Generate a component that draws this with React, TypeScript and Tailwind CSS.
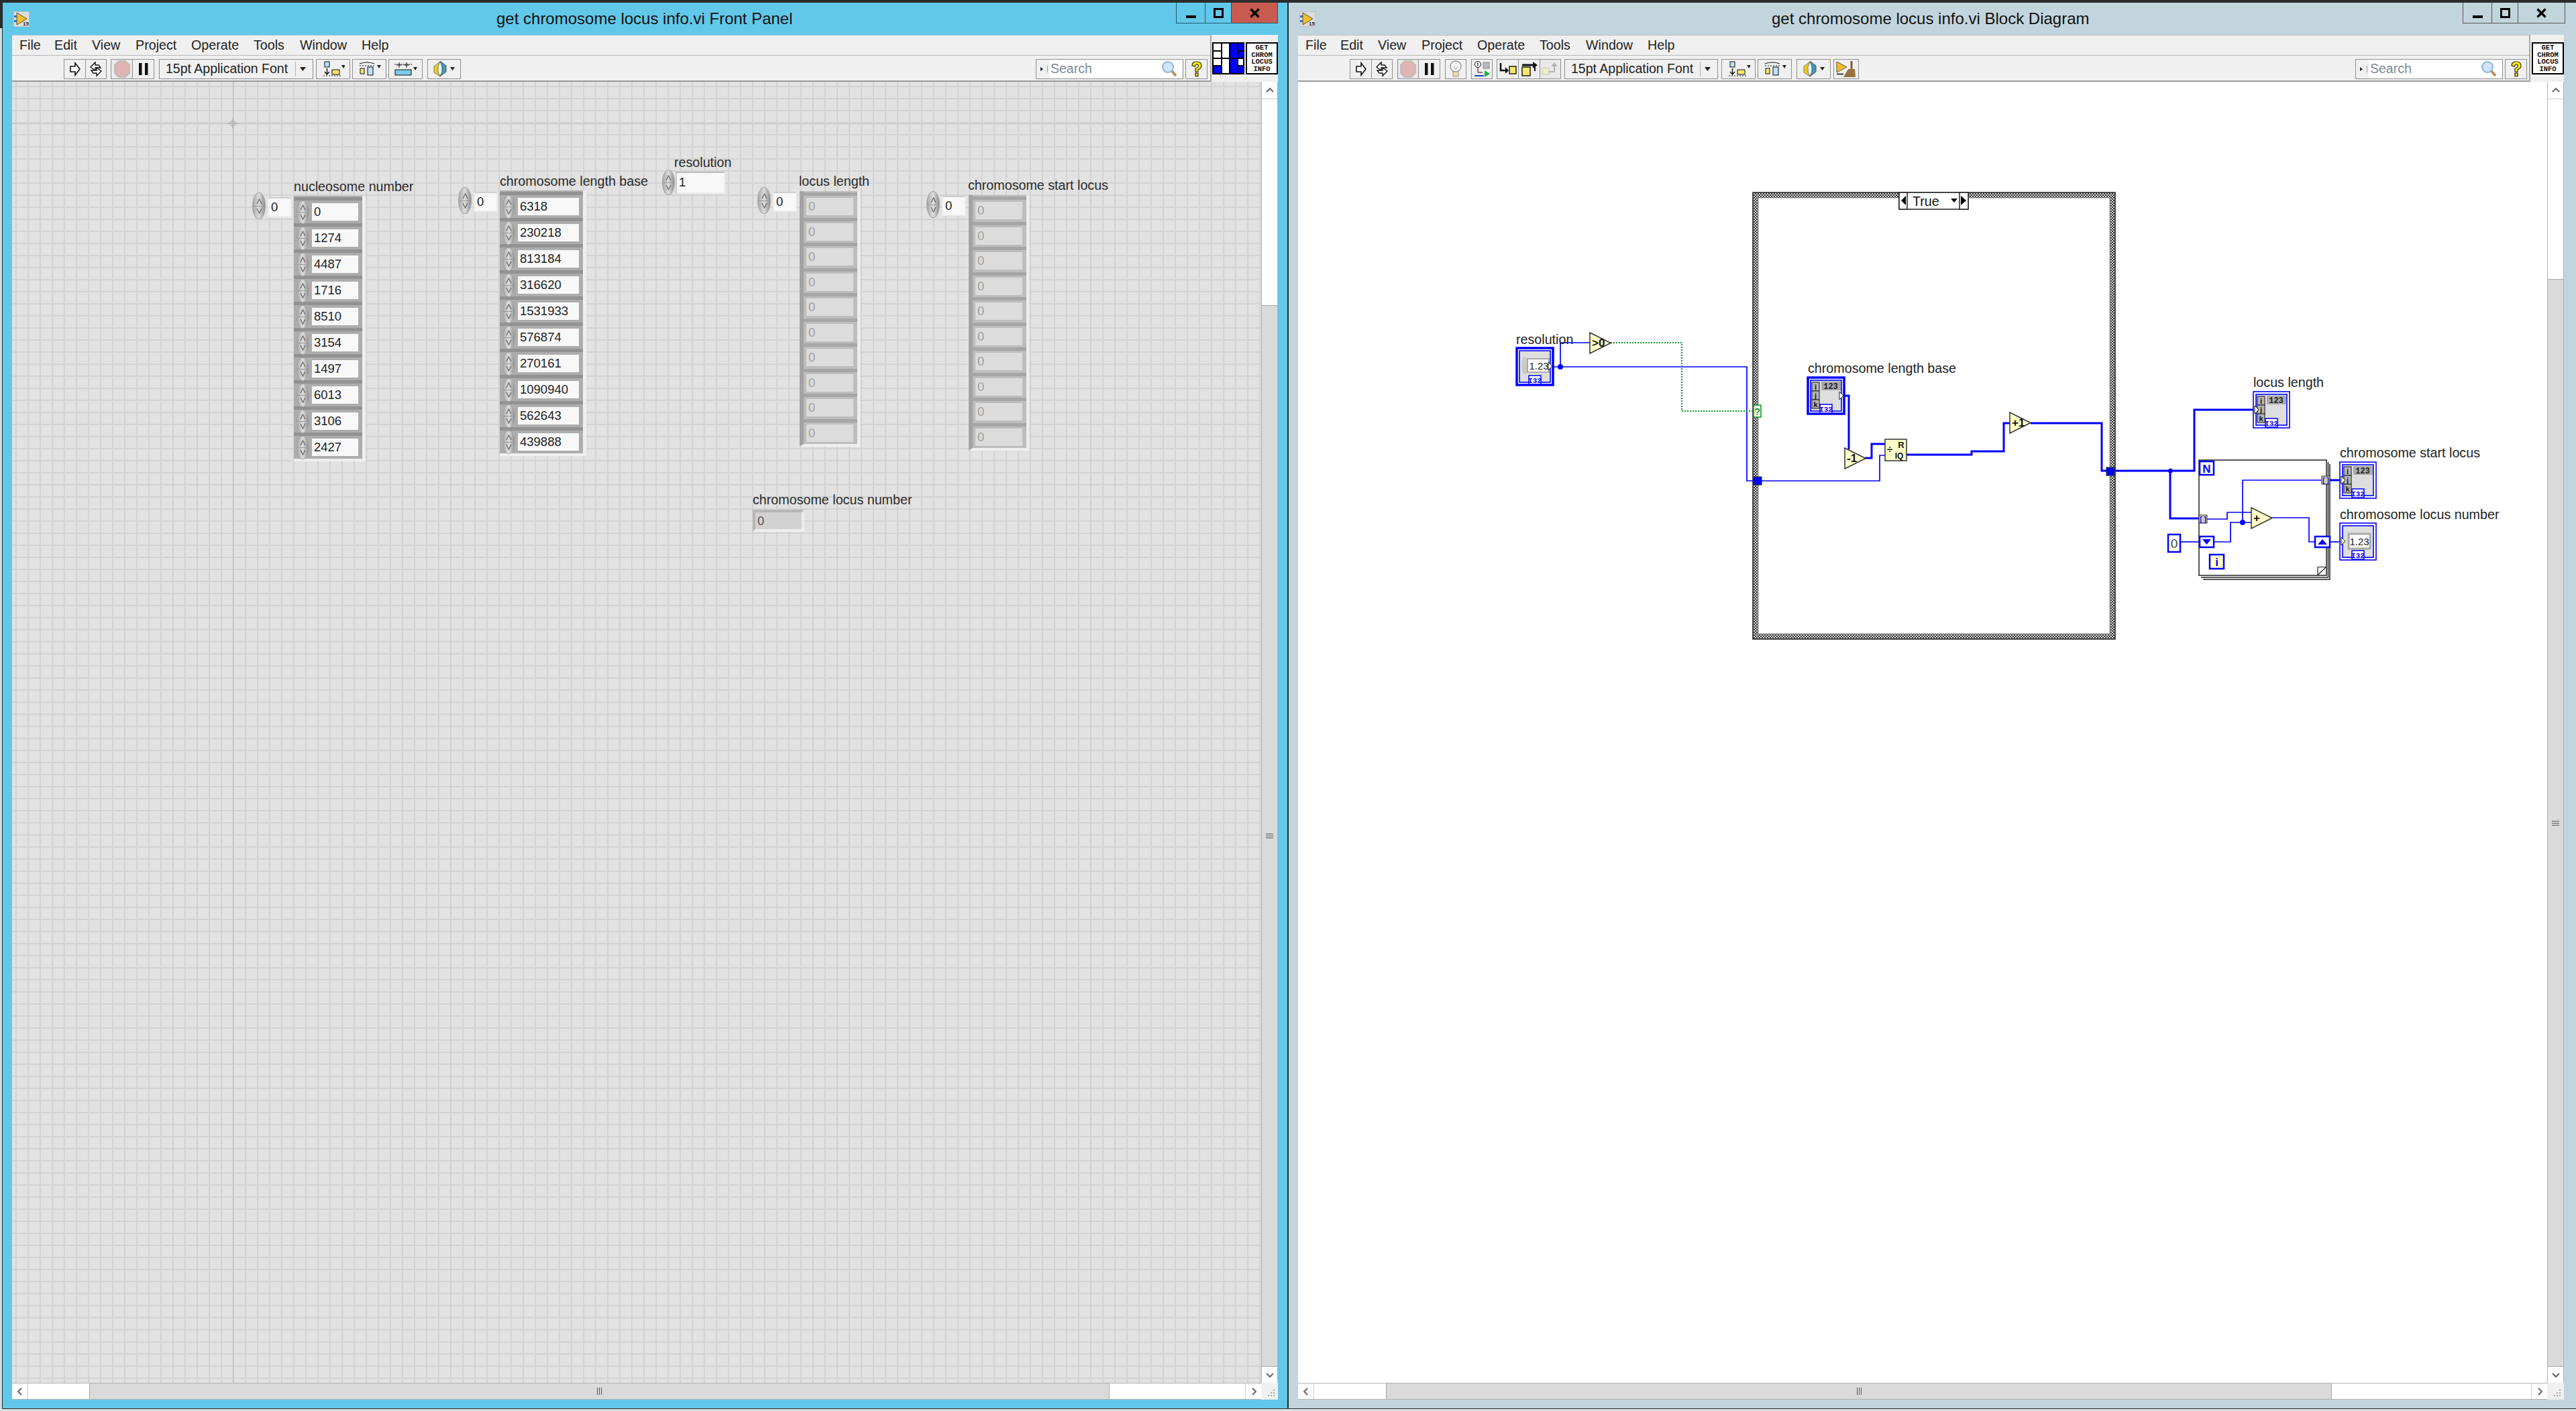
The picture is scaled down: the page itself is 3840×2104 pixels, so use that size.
import React from "react";

const BLUE = "#0000ff";

const Tri = ({ x, y, label, size = 17 }: { x: number; y: number; label: string; size?: number }) => (
  <g>
    <polygon points={`${x},${y} ${x + 31},${y + 15.5} ${x},${y + 31}`} fill="#ffffc8" stroke="#333" strokeWidth="1.5" />
    <text x={x + 3} y={y + 21} fontSize={size} fontWeight="bold" fill="#111">{label}</text>
  </g>
);

const I32 = ({ x, y }: { x: number; y: number }) => (
  <g>
    <rect x={x} y={y} width="18" height="13" fill="#fff" stroke={BLUE} strokeWidth="1.5" />
    <text x={x + 9} y={y + 11} fontSize="11" fontWeight="bold" fill={BLUE} textAnchor="middle" fontFamily="Liberation Mono">I32</text>
  </g>
);

const IJK = ({ x, y }: { x: number; y: number }) => (
  <g>
    {["i", "j", "k"].map((c, n) => (
      <g key={c}>
        <rect x={x} y={y + n * 13} width="11" height="13" fill="#b5b5b5" stroke="#333" strokeWidth="1.2" />
        <text x={x + 5.5} y={y + 10.5 + n * 13} fontSize="11" fontWeight="bold" fill="#111" textAnchor="middle">{c}</text>
      </g>
    ))}
  </g>
);

const Terminal = ({ x, y, h = 56, thick, kind }: { x: number; y: number; h?: number; thick?: boolean; kind: "array" | "scalar" }) => {
  const tipX = thick ? x + 48 : x + 3;
  return (
    <g>
      <rect x={x + 1} y={y + 1} width="54" height={h - 2} fill="#fff" stroke={BLUE} strokeWidth={thick ? 3.5 : 1.6} />
      <rect x={x + 5} y={y + 5} width="46" height={h - 10} fill="#dedede" stroke={BLUE} strokeWidth="1.6" />
      {kind === "array" && <IJK x={x + 7} y={y + 8} />}
      {kind === "array" && (
        <g>
          <rect x={x + 21} y={y + 7} width="29" height="13" fill="#aaa" />
          <text x={x + 35} y={y + 18} fontSize="12" fontWeight="bold" fontFamily="Liberation Mono" textAnchor="middle" fill="#222">123</text>
        </g>
      )}
      {kind === "scalar" && thick && (
        <g>
          <ellipse cx={x + 13} cy={y + 27} rx="5" ry="13" fill="#c9c9c9" />
          <rect x={x + 17} y={y + 17} width="32" height="20" fill="#fff" stroke="#aaa" strokeWidth="2" />
          <text x={x + 34} y={y + 33} fontSize="15" fill="#222" textAnchor="middle">1.23</text>
        </g>
      )}
      {kind === "scalar" && !thick && (
        <g>
          <rect x={x + 14} y={y + 17} width="32" height="22" fill="#fff" stroke="#aaa" strokeWidth="3" />
          <text x={x + 30} y={y + 34} fontSize="15" fill="#222" textAnchor="middle">1.23</text>
        </g>
      )}
      <polygon points={`${tipX},${y + 22} ${tipX + 6},${y + 28} ${tipX},${y + 34}`} fill="#fff" stroke="#222" strokeWidth="1" />
      <I32 x={x + 19} y={y + h - 15} />
    </g>
  );
};

const ArrTunnel = ({ x, y }: { x: number; y: number }) => (
  <g>
    <rect x={x} y={y} width="12" height="12" fill="#d8cfa8" stroke="#333" strokeWidth="1" />
    <text x={x + 6} y={y + 10} fontSize="10" fontWeight="bold" fill={BLUE} textAnchor="middle" fontFamily="Liberation Mono">[]</text>
  </g>
);

const Diagram = () => (
  <svg viewBox="1935 122 1862 1940" className="block h-[1940px] w-[1862px] shrink-0">
    <defs>
      <pattern id="chk" width="4" height="4" patternUnits="userSpaceOnUse">
        <rect width="4" height="4" fill="#d8d8d8" />
        <rect width="2" height="2" fill="#333" />
        <rect x="2" y="2" width="2" height="2" fill="#333" />
      </pattern>
    </defs>

    {/* case structure */}
    <rect x="2617" y="291" width="532" height="658" fill="none" stroke="url(#chk)" strokeWidth="8" />
    <rect x="2613" y="287" width="540" height="666" fill="none" stroke="#222" strokeWidth="1.5" />
    <rect x="2621" y="295" width="524" height="650" fill="none" stroke="#777" strokeWidth="0.8" />
    <rect x="2831" y="287" width="103" height="25" fill="#fff" stroke="#222" strokeWidth="1.5" />
    <rect x="2831" y="287" width="12" height="25" fill="#fff" stroke="#222" strokeWidth="1.5" />
    <rect x="2921" y="287" width="13" height="25" fill="#fff" stroke="#222" strokeWidth="1.5" />
    <polygon points="2841,292 2841,306 2834,299" fill="#000" />
    <polygon points="2923,292 2923,306 2931,299" fill="#000" />
    <polygon points="2908,296 2918,296 2913,302" fill="#000" />
    <text x="2851" y="307" fontSize="19.7" fill="#111">True</text>

    {/* for loop frame, under its wires */}
    <polyline points="3473,692 3473,864 3284,864" fill="none" stroke="#222" strokeWidth="1.5" />
    <polyline points="3470.5,689 3470.5,861 3281,861" fill="none" stroke="#222" strokeWidth="1.5" />
    <rect x="3278" y="686" width="190" height="172" fill="#fff" stroke="#222" strokeWidth="1.5" />
    <path d="M3455 857.5 V845.5 H3467.5" fill="none" stroke="#222" strokeWidth="1.2" />
    <path d="M3455 857.5 L3467.5 845.5" fill="none" stroke="#222" strokeWidth="1.2" />

    {/* scalar wires */}
    <g fill="none" stroke={BLUE} strokeWidth="1.7">
      <polyline points="2316,547 2604,547 2604,717 2614,717" />
      <polyline points="2326,547 2326,511 2370,511" />
      <polyline points="2626,717 2802,717 2802,679 2810,679" />
      <polyline points="3290,774 3320,774 3320,764 3356,764" />
      <polyline points="3301,808 3325,808 3325,779 3356,779" />
      <polyline points="3461,716 3343,716 3343,779" />
      <polyline points="3251,808 3278,808" />
      <polyline points="3386,772 3442,772 3442,808 3450,808" />
      <polyline points="3473,808 3487,808" />
    </g>
    <polyline points="2401,511 2507,511 2507,613 2614,613" fill="none" stroke="#009a20" strokeWidth="2" strokeDasharray="2 2" />

    {/* array wires */}
    <g fill="none" stroke={BLUE} strokeWidth="3">
      <polyline points="2750,590 2756,590 2756,670" />
      <polyline points="2780,683 2790,683 2790,662 2810,662" />
      <polyline points="2842,678 2939,678 2939,673 2987,673 2987,631 2996,631" />
      <polyline points="3027,631 3133,631 3133,702 3140,702" />
      <polyline points="3152,702 3271,702 3271,611 3360,611" />
      <polyline points="3235,702 3235,773 3278,773" />
      <polyline points="3473,716 3490,716" />
    </g>
    <circle cx="2326" cy="547" r="4" fill={BLUE} />
    <circle cx="3235.5" cy="702" r="3.5" fill={BLUE} />
    <circle cx="3343" cy="779" r="4" fill={BLUE} />

    {/* tunnels */}
    <rect x="2614" y="711" width="12" height="12" fill={BLUE} stroke="#222" strokeWidth="1" />
    <rect x="3140" y="697" width="12" height="12" fill={BLUE} stroke="#222" strokeWidth="1" />
    <rect x="2614" y="604" width="11" height="18" fill="#e8f8e0" stroke="#009a20" strokeWidth="1.5" />
    <text x="2619.5" y="619" fontSize="15" fill="#006a10" textAnchor="middle">?</text>

    {/* primitives */}
    <Tri x={2370} y={496} label=">0" />
    <Tri x={2750} y={668} label="-1" />
    <Tri x={2996} y={615} label="+1" />
    <Tri x={3356} y={757} label=" +" />
    <rect x="2810" y="655" width="32" height="32" fill="#ffffc8" stroke="#333" strokeWidth="1.5" />
    <text x="2817" y="675" fontSize="15" fontWeight="bold" fill="#111" textAnchor="middle">÷</text>
    <text x="2834" y="668" fontSize="13" fontWeight="bold" fill="#111" textAnchor="middle">R</text>
    <text x="2831" y="684" fontSize="12" fontWeight="bold" fill="#111" textAnchor="middle">IQ</text>

    {/* for loop terminals */}
    <rect x="3279" y="688" width="21" height="20" fill="#fff" stroke={BLUE} strokeWidth="2.5" />
    <text x="3289.5" y="705" fontSize="17" fontWeight="bold" fill={BLUE} textAnchor="middle">N</text>
    <rect x="3294" y="827" width="21" height="21" fill="#ffffc8" stroke={BLUE} strokeWidth="2.5" />
    <text x="3304.5" y="844" fontSize="17" fontWeight="bold" fill={BLUE} textAnchor="middle">i</text>
    <ArrTunnel x={3278} y={768} />
    <ArrTunnel x={3461} y={710} />
    <rect x="3279" y="800" width="21" height="16" fill="#fff" stroke={BLUE} strokeWidth="2.5" />
    <polygon points="3283,804 3296,804 3289.5,812" fill={BLUE} />
    <rect x="3451" y="800" width="22" height="16" fill="#fff" stroke={BLUE} strokeWidth="2.5" />
    <polygon points="3455,812 3469,812 3462,804" fill={BLUE} />
    <rect x="3232" y="797" width="18" height="26" fill="#fff" stroke={BLUE} strokeWidth="2.5" />
    <text x="3241" y="817" fontSize="19" fill="#444" textAnchor="middle">0</text>

    {/* terminals */}
    <Terminal x={2260} y={518} h={57} thick kind="scalar" />
    <Terminal x={2694} y={562} thick kind="array" />
    <Terminal x={3358} y={583} kind="array" />
    <Terminal x={3487} y={688} kind="array" />
    <Terminal x={3487} y={779} h={57} kind="scalar" />

    {/* labels */}
    <g fontSize="19.7" fill="#222">
      <text x="2260" y="513">resolution</text>
      <text x="2695" y="556">chromosome length base</text>
      <text x="3359" y="577">locus length</text>
      <text x="3488" y="682">chromosome start locus</text>
      <text x="3488" y="774">chromosome locus number</text>
    </g>
  </svg>
);

const Spinner = ({ className }: { className: string }) => (
  <div className={`flex shrink-0 flex-col items-center justify-center gap-[2px] rounded-[50%] border border-[#a5a5a5] bg-linear-to-r from-[#a8a8a8] via-[#dedede] to-[#8f8f8f] ${className}`}>
    <svg width="9" height="9" viewBox="0 0 9 9"><path d="M1 8 L4.5 1 L8 8" fill="none" stroke="#666" strokeWidth="1.2" /></svg>
    <div className="h-px w-full bg-[#9a9a9a]" />
    <svg width="9" height="9" viewBox="0 0 9 9"><path d="M1 1 L4.5 8 L8 1" fill="none" stroke="#666" strokeWidth="1.2" /></svg>
  </div>
);

const NumInput = ({ value, className }: { value: string; className: string }) => (
  <div className={`flex items-center pl-[3px] text-[18.5px] text-[#222] ${className}`}>{value}</div>
);

const Label = ({ text, className }: { text: string; className: string }) => (
  <div className={`absolute whitespace-nowrap text-[19.7px] leading-6 text-[#2a2a2a] ${className}`}>{text}</div>
);

const IndexBox = ({ className }: { className: string }) => (
  <div className={`absolute flex items-start gap-[3px] ${className}`}>
    <Spinner className="h-[40px] w-[20px]" />
    <NumInput value="0" className="mt-[7px] h-[30px] w-[36px] border-2 border-t-[#cfcfcf] border-r-[#ededed] border-b-[#ededed] border-l-[#ededed] bg-[#f8f8f8]" />
  </div>
);

const ControlArray = ({ values, width, className }: { values: string[]; width: string; className: string }) => (
  <div className={`absolute border-r-[5px] border-b-[4px] border-r-[#efefef] border-b-[#efefef] bg-[#adadad] pt-[2px] ${className}`}>
    {values.map((v) => (
      <div key={v} className="flex h-[39px] items-center gap-[4px] border-t-[5px] border-t-[#929292] pr-[6px] pl-[4px]">
        <Spinner className="h-[35px] w-[19px]" />
        <NumInput value={v} className={`h-[26px] bg-[#f8f8f8] ${width}`} />
      </div>
    ))}
  </div>
);

const ZEROS = ["a", "b", "c", "d", "e", "f", "g", "h", "i", "j"];

const IndicatorArray = ({ className }: { className: string }) => (
  <div className={`absolute w-[90px] border-r-[4px] border-b-[4px] border-l-[6px] border-r-[#efefef] border-b-[#efefef] border-l-[#a3a3a3] bg-[#bdbdbd] pt-[2px] ${className}`}>
    {ZEROS.map((k) => (
      <div key={k} className="flex h-[37.5px] items-center border-t-[5px] border-t-[#a6a6a6] pr-[5px] pl-[4px]">
        <div className="flex h-[26px] w-[70px] items-center bg-[#dcdcdc] pl-[3px] text-[18.5px] text-[#a0a0a0]">0</div>
      </div>
    ))}
  </div>
);

const FrontPanel = () => (
  <div className="relative min-w-0 flex-1 overflow-hidden bg-[#e2e2e2] bg-[linear-gradient(to_right,#d3d3d3_2px,transparent_2px),linear-gradient(to_bottom,#d3d3d3_2px,transparent_2px)] bg-size-[18px_18px] bg-position-[5px_6px]">
    <div className="absolute top-0 bottom-0 left-[329px] w-px bg-[#b9b9b9]" />
    <div className="absolute top-[62px] right-0 left-0 h-px bg-[#c4c4c4]" />
    <svg width="16" height="16" viewBox="0 0 16 16" className="absolute top-[54px] left-[321px]">
      <circle cx="8" cy="8" r="4" fill="none" stroke="#aaa" />
      <path d="M8 0V16M0 8H16" stroke="#aaa" />
    </svg>

    <Label text="nucleosome number" className="top-[144px] left-[420px]" />
    <IndexBox className="top-[165px] left-[358px]" />
    <ControlArray className="top-[170px] left-[420px]" width="w-[69px]" values={["0", "1274", "4487", "1716", "8510", "3154", "1497", "6013", "3106", "2427"]} />

    <Label text="chromosome length base" className="top-[136px] left-[727px]" />
    <IndexBox className="top-[157px] left-[665px]" />
    <ControlArray className="top-[162px] left-[727px]" width="w-[91px]" values={["6318", "230218", "813184", "316620", "1531933", "576874", "270161", "1090940", "562643", "439888"]} />

    <Label text="resolution" className="top-[108px] left-[987px]" />
    <div className="absolute top-[131px] left-[969px] flex items-center gap-[1px]">
      <Spinner className="h-[38px] w-[19px]" />
      <NumInput value="1" className="h-[33px] w-[74px] border-2 border-t-[#bdbdbd] border-r-[#ededed] border-b-[#ededed] border-l-[#c8c8c8] bg-[#f8f8f8]" />
    </div>

    <Label text="locus length" className="top-[136px] left-[1173px]" />
    <IndexBox className="top-[157px] left-[1111px]" />
    <IndicatorArray className="top-[163px] left-[1174px]" />

    <Label text="chromosome start locus" className="top-[142px] left-[1425px]" />
    <IndexBox className="top-[163px] left-[1363px]" />
    <IndicatorArray className="top-[169px] left-[1426px]" />

    <Label text="chromosome locus number" className="top-[611px] left-[1104px]" />
    <div className="absolute top-[638px] left-[1104px] flex h-[33px] w-[77px] items-center border-[4px] border-t-[#b5b5b5] border-r-[#ededed] border-b-[#ededed] border-l-[#b5b5b5] bg-[#d2d2d2] pl-[3px] text-[18.5px] text-[#555]">0</div>
  </div>
);

const Chevron = ({ dir }: { dir: "up" | "down" | "left" | "right" }) => {
  const d = { up: "M2 9 L7 4 L12 9", down: "M2 5 L7 10 L12 5", left: "M9 2 L4 7 L9 12", right: "M5 2 L10 7 L5 12" }[dir];
  return (
    <svg width="14" height="14" viewBox="0 0 14 14"><path d={d} fill="none" stroke="#666" strokeWidth="2" /></svg>
  );
};

const VScroll = ({ whiteTop }: { whiteTop: string }) => (
  <div className="flex w-[25px] shrink-0 flex-col border-r border-l border-[#b0b0b0] bg-white">
    <div className="flex h-[26px] items-center justify-center border-b border-[#ccc]"><Chevron dir="up" /></div>
    <div className={whiteTop} />
    <div className="flex flex-1 flex-col items-center justify-center gap-[2px] border-y border-[#a8a8a8] bg-[#dadada]">
      <div className="h-[1px] w-[11px] bg-[#555]" />
      <div className="h-[1px] w-[11px] bg-[#555]" />
      <div className="h-[1px] w-[11px] bg-[#555]" />
    </div>
    <div className="flex h-[24px] items-center justify-center"><Chevron dir="down" /></div>
  </div>
);

const HScroll = ({ leftWhite, rightWhite }: { leftWhite: string; rightWhite: string }) => (
  <div className="flex h-[25px] shrink-0">
    <div className="flex min-w-0 flex-1 border-y border-[#b4b4b4] bg-white">
      <div className="flex w-[24px] shrink-0 items-center justify-center border-r border-[#ccc]"><Chevron dir="left" /></div>
      <div className={leftWhite} />
      <div className="flex flex-1 items-center justify-center gap-[2px] border-x border-[#a8a8a8] bg-[#dadada]">
        <div className="h-[11px] w-[1px] bg-[#555]" />
        <div className="h-[11px] w-[1px] bg-[#555]" />
        <div className="h-[11px] w-[1px] bg-[#555]" />
      </div>
      <div className={rightWhite} />
      <div className="flex w-[24px] shrink-0 items-center justify-center border-l border-[#ccc]"><Chevron dir="right" /></div>
    </div>
    <div className="flex w-[25px] shrink-0 items-end justify-end bg-[#f0f0f0] p-[4px]">
      <svg width="12" height="12" viewBox="0 0 12 12" fill="#aaa">
        <rect x="9" y="1" width="2" height="2" /><rect x="5" y="5" width="2" height="2" /><rect x="9" y="5" width="2" height="2" />
        <rect x="1" y="9" width="2" height="2" /><rect x="5" y="9" width="2" height="2" /><rect x="9" y="9" width="2" height="2" />
      </svg>
    </div>
  </div>
);

const LvIcon = () => (
  <svg width="24" height="23" viewBox="0 0 24 23" className="shrink-0">
    <rect width="24" height="23" fill="#ddd" stroke="#aaa" />
    <rect x="1" y="6" width="8" height="3" fill="#3a70c0" />
    <rect x="1" y="13" width="8" height="3" fill="#3a70c0" />
    <polygon points="5,2 20,11 5,20" fill="#f0c020" stroke="#555" />
    <text x="14" y="21" fontSize="8" fontWeight="bold" fill="#222">15</text>
  </svg>
);

const WinButtons = ({ tone, closeTone, widths }: { tone: string; closeTone: string; widths: string[] }) => (
  <div className={`flex h-[31px] self-start border-r border-b border-l ${tone}`}>
    <div className={`flex items-end justify-center pb-[7px] ${widths[0]}`}><div className="h-[4px] w-[15px] bg-black" /></div>
    <div className={`flex items-center justify-center border-l ${tone} ${widths[1]}`}><div className="h-[15px] w-[15px] border-[3px] border-black" /></div>
    <div className={`flex items-center justify-center border-l ${tone} ${closeTone} ${widths[2]}`}>
      <svg width="15" height="15" viewBox="0 0 15 15"><path d="M1.5 1.5 L13.5 13.5 M13.5 1.5 L1.5 13.5" stroke="#000" strokeWidth="3.4" /></svg>
    </div>
  </div>
);

const MenuBar = ({ items }: { items: [string, string][] }) => (
  <div className="flex h-[31px] shrink-0 items-center border-t border-b border-t-[#b8c2c6] border-b-[#b8b8b8] pl-[11px] text-[19.7px] text-[#222]">
    {items.map(([name, w]) => (
      <div key={name} className={w}>{name}</div>
    ))}
  </div>
);

const Btn = ({ w, children, dim }: { w: string; children: React.ReactNode; dim?: boolean }) => (
  <div className={`flex h-[30px] shrink-0 items-center justify-center border border-[#8f8f8f] ${dim ? "bg-[#e9e9e9]" : "bg-[#f0f0f0]"} ${w}`}>{children}</div>
);

const Run = () => (
  <svg width="20" height="22" viewBox="0 0 20 22"><path d="M3 7 H10 V2 L17 11 L10 20 V15 H3 Z" fill="#fff" stroke="#111" strokeWidth="1.6" /></svg>
);
const RunCont = () => (
  <svg width="22" height="24" viewBox="0 0 22 24" fill="#fff" stroke="#111" strokeWidth="1.4">
    <path d="M3 9 L10 2 V6 H15 L18 10 H10 V14 Z" />
    <path d="M19 15 L12 22 V18 H7 L4 14 H12 V10 Z" />
  </svg>
);
const Abort = () => (
  <svg width="24" height="26" viewBox="0 0 24 26"><polygon points="7,1 17,1 23,7 23,19 17,25 7,25 1,19 1,7" fill="#e0b4b4" stroke="#b5b5b5" strokeWidth="1.5" /></svg>
);
const Pause = () => (
  <svg width="16" height="20" viewBox="0 0 16 20"><rect x="1" y="1" width="4.5" height="18" fill="#111" /><rect x="10" y="1" width="4.5" height="18" fill="#111" /></svg>
);
const Drop = () => <svg width="9" height="6" viewBox="0 0 9 6"><polygon points="0,0 9,0 4.5,6" fill="#222" /></svg>;
const AlignIcon = () => (
  <svg width="34" height="24" viewBox="0 0 34 24">
    <rect x="4" y="1" width="7" height="8" fill="#bfe0f5" stroke="#111" />
    <path d="M7.5 11V19M4 16L7.5 20L11 16" fill="none" stroke="#111" strokeWidth="1.4" />
    <rect x="15" y="13" width="11" height="7" fill="#f5e870" stroke="#111" />
    <path d="M2 22H28" stroke="#111" strokeDasharray="2 2" />
    <polygon points="29,6 35,6 32,11" fill="#222" />
  </svg>
);
const DistIcon = () => (
  <svg width="34" height="24" viewBox="0 0 34 24">
    <path d="M2 4 Q13 0 24 4" fill="none" stroke="#111" />
    <path d="M2 7H24" stroke="#111" strokeDasharray="2 2" />
    <rect x="3" y="11" width="6" height="8" fill="#f5e870" stroke="#111" />
    <rect x="14" y="9" width="8" height="12" fill="#bfe0f5" stroke="#111" />
    <polygon points="28,6 34,6 31,11" fill="#222" />
  </svg>
);
const ResizeIcon = () => (
  <svg width="36" height="24" viewBox="0 0 36 24">
    <path d="M1 5H27" stroke="#111" strokeDasharray="2 1" />
    <path d="M8 2V10M19 2V10M4 6H12M15 6H23" stroke="#111" />
    <rect x="2" y="13" width="24" height="8" fill="#7ccbe8" stroke="#111" />
    <polygon points="29,9 35,9 32,14" fill="#222" />
  </svg>
);
const ReorderIcon = () => (
  <svg width="36" height="26" viewBox="0 0 36 26">
    <path d="M12 2 L3 9 V18 L12 24 L9 17 V9 Z" fill="#e8d020" stroke="#777" />
    <path d="M12 1 L21 8 V17 L12 24 L15 17 V9 Z" fill="#3a9ac0" stroke="#555" />
    <polygon points="27,10 34,10 30.5,15" fill="#222" />
  </svg>
);
const Bulb = () => (
  <svg width="20" height="26" viewBox="0 0 20 26">
    <circle cx="10" cy="9" r="8" fill="#f5f5f5" stroke="#999" strokeWidth="1.4" />
    <path d="M7 9L10 14L13 9" fill="none" stroke="#aaa" />
    <rect x="6" y="17" width="8" height="7" fill="#e8e0a0" stroke="#999" />
  </svg>
);
const Retain = () => (
  <svg width="26" height="26" viewBox="0 0 26 26">
    <circle cx="7" cy="6" r="4.5" fill="#fff" stroke="#111" />
    <path d="M7 3V9" stroke="#111" />
    <rect x="15" y="3" width="9" height="9" fill="#bbb" stroke="#888" />
    <path d="M7 11V18H14" fill="none" stroke="#111" />
    <path d="M2 23H16" stroke="#2040d0" strokeWidth="2" />
    <polygon points="17,15 25,20 17,25" fill="#20b040" />
  </svg>
);
const StepInto = () => (
  <svg width="28" height="22" viewBox="0 0 28 22">
    <path d="M3 2V13H10" fill="none" stroke="#111" strokeWidth="2.5" />
    <polygon points="10,8 15,13 10,18" fill="#111" />
    <rect x="16" y="7" width="10" height="11" fill="#f5e870" stroke="#111" strokeWidth="1.4" />
  </svg>
);
const StepOver = () => (
  <svg width="28" height="24" viewBox="0 0 28 24">
    <rect x="3" y="9" width="12" height="13" fill="#f5e870" stroke="#111" strokeWidth="1.4" />
    <path d="M3 6H20" stroke="#111" strokeWidth="3" />
    <polygon points="19,1 26,6 19,11" fill="#111" />
    <path d="M22 8V15" stroke="#111" strokeWidth="2" />
  </svg>
);
const StepOut = () => (
  <svg width="28" height="22" viewBox="0 0 28 22" opacity="0.55">
    <rect x="2" y="9" width="10" height="10" fill="#f5f0b0" stroke="#aaa" />
    <path d="M12 15H20V6" fill="none" stroke="#888" strokeWidth="2" />
    <polygon points="15,7 20,1 25,7" fill="#888" />
  </svg>
);
const Cleanup = () => (
  <svg width="32" height="26" viewBox="0 0 32 26">
    <polygon points="2,2 17,10 2,18" fill="#f0c020" stroke="#555" />
    <path d="M24 1V13" stroke="#8a5a20" strokeWidth="3" />
    <polygon points="19,13 29,13 30,25 12,25" fill="#9a7040" />
    <rect x="2" y="19" width="10" height="3" fill="#777" />
  </svg>
);

const FontPicker = ({ w, sep }: { w: string; sep: string }) => (
  <div className={`relative flex h-[30px] shrink-0 items-center border border-[#8f8f8f] bg-[#f0f0f0] pl-[9px] text-[19.5px] whitespace-nowrap text-[#222] ${w}`}>
    15pt Application Font
    <div className={`absolute top-[3px] bottom-[3px] w-px bg-[#b0b0b0] ${sep}`} />
    <div className="absolute top-[11px] right-[10px] flex"><Drop /></div>
  </div>
);

const SearchBox = () => (
  <div className="flex h-[30px] w-[220px] shrink-0 items-center border border-[#8f8f8f] bg-[#f0f0f0]">
    <svg width="14" height="10" viewBox="0 0 14 10" className="ml-[5px] shrink-0"><polygon points="1,2 5,5 1,8" fill="#222" /><path d="M11.5 0V10" stroke="#999" /></svg>
    <div className="flex h-full flex-1 items-center justify-between bg-white pr-[8px] pl-[2px] text-[19.5px] text-[#7c8a99]">
      Search
      <svg width="24" height="25" viewBox="0 0 24 25">
        <path d="M15 15 L22 23" stroke="#c08a50" strokeWidth="3.5" />
        <circle cx="10" cy="10" r="8" fill="#cfe6fa" stroke="#8fb4dc" strokeWidth="2" />
      </svg>
    </div>
  </div>
);

const Help = ({ w }: { w: string }) => (
  <div className={`ml-[3px] flex h-[30px] shrink-0 items-center justify-center border border-[#8f8f8f] bg-[#f0f0f0] ${w}`}>
    <svg width="18" height="24" viewBox="0 0 18 24">
      <path d="M2 7 Q2 1 9 1 Q16 1 16 7 Q16 11 11 13 V16 H7 V11 Q12 9 11.5 7 Q11 5 9 5 Q7 5 6.5 8 Z" fill="#ffee00" stroke="#222" strokeWidth="1.2" />
      <rect x="7" y="18" width="4" height="4.5" fill="#ffee00" stroke="#222" strokeWidth="1.2" />
    </svg>
  </div>
);

const ViIcon = () => (
  <div className="flex h-[48px] w-[48px] shrink-0 flex-col items-center justify-center border-2 border-black bg-white font-['Liberation_Mono',monospace] text-[10.5px] leading-[10.5px] font-bold text-[#111]">
    <div>GET</div>
    <div>CHROM</div>
    <div>LOCUS</div>
    <div>INFO</div>
  </div>
);

const Pane = ({ h, blue }: { h: string; blue?: boolean }) => (
  <div className={`border border-black ${blue ? "bg-[#0000ff]" : "bg-white"} ${h}`} />
);

const ConnectorPane = () => (
  <div className="flex h-[48px] w-[48px] shrink-0 border border-black bg-black">
    <div className="flex w-[13px] flex-col">
      <Pane h="h-[12px]" /><Pane h="h-[11px]" /><Pane h="h-[11px]" /><Pane h="h-[12px]" blue />
    </div>
    <div className="flex w-[12px] flex-col">
      <Pane h="h-[23px]" /><Pane h="h-[23px]" />
    </div>
    <div className="flex w-[12px] flex-col">
      <Pane h="h-[23px]" blue /><Pane h="h-[23px]" blue />
    </div>
    <div className="flex w-[9px] flex-col">
      <Pane h="h-[12px]" blue /><Pane h="h-[11px]" blue /><Pane h="h-[11px]" /><Pane h="h-[12px]" blue />
    </div>
  </div>
);

const menuItems: [string, string][] = [
  ["File", "w-[52px]"], ["Edit", "w-[56px]"], ["View", "w-[65px]"], ["Project", "w-[83px]"],
  ["Operate", "w-[93px]"], ["Tools", "w-[69px]"], ["Window", "w-[92px]"], ["Help", "w-[50px]"],
];

const App = () => (
  <div className="flex h-[2104px] w-[3840px] flex-col overflow-hidden bg-[#dcdcdc] font-['Liberation_Sans',sans-serif]">
    <div className="h-[4px] shrink-0 bg-[#2b2b2b]" />
    <div className="flex h-[2097px] shrink-0">
      <div className="flex w-[3px] shrink-0 flex-col bg-[#d5dfe0]">
        <div className="h-[38px] bg-[#2b2b2b]" />
      </div>

      {/* front panel window */}
      <div className="flex w-[1918px] shrink-0 flex-col border-r-2 border-b border-l border-[#1d2b33] bg-[#62c8ea] pr-[14px] pl-[14px]">
        <div className="flex h-[48px] shrink-0 items-center pl-[2px]">
          <LvIcon />
          <div className="ml-[696px] text-[24px] whitespace-nowrap text-[#111]">get chromosome locus info.vi Front Panel</div>
          <div className="ml-auto flex self-start">
            <WinButtons tone="border-[#1f5a74]" closeTone="bg-[#c75b50]" widths={["w-[42px]", "w-[39px]", "w-[69px]"]} />
          </div>
        </div>
        <div className="flex h-[70px] shrink-0 bg-[#f0f0f0]">
          <div className="flex min-w-0 flex-1 flex-col">
            <MenuBar items={menuItems} />
            <div className="flex flex-1 items-center border-b-2 border-b-[#9a9a9a] pt-[2px] pr-[4px] pl-[77px]">
              <Btn w="w-[33px]"><Run /></Btn>
              <Btn w="w-[32px] -ml-px"><RunCont /></Btn>
              <Btn w="w-[33px] ml-[6px]" dim><Abort /></Btn>
              <Btn w="w-[33px] -ml-px"><Pause /></Btn>
              <div className="ml-[7px] flex"><FontPicker w="w-[230px]" sep="left-[202px]" /></div>
              <Btn w="w-[51px] ml-[4px]"><AlignIcon /></Btn>
              <Btn w="w-[51px] ml-[3px]"><DistIcon /></Btn>
              <Btn w="w-[51px] ml-[3px]"><ResizeIcon /></Btn>
              <Btn w="w-[50px] ml-[7px]"><ReorderIcon /></Btn>
              <div className="ml-auto flex"><SearchBox /><Help w="w-[33px]" /></div>
            </div>
          </div>
          <div className="flex w-[101px] shrink-0 items-center gap-[2px] border-l-2 border-[#a8a8a8] pl-[1px]">
            <ConnectorPane />
            <ViIcon />
          </div>
        </div>
        <div className="flex min-h-0 flex-1">
          <FrontPanel />
          <VScroll whiteTop="h-[307px]" />
        </div>
        <HScroll leftWhite="w-[91px]" rightWhite="w-[202px]" />
        <div className="h-[13px] shrink-0" />
      </div>

      {/* block diagram window */}
      <div className="flex w-[1919px] shrink-0 flex-col border-b border-[#1d2b33] bg-[#c3d5dc] pr-[18px] pl-[14px]">
        <div className="flex h-[48px] shrink-0 items-center pl-[2px]">
          <LvIcon />
          <div className="ml-[680px] text-[24px] whitespace-nowrap text-[#111]">get chromosome locus info.vi Block Diagram</div>
          <div className="-mr-[2px] ml-auto flex self-start">
            <WinButtons tone="border-[#555]" closeTone="" widths={["w-[42px]", "w-[39px]", "w-[70px]"]} />
          </div>
        </div>
        <div className="flex h-[70px] shrink-0 bg-[#f0f0f0]">
          <div className="flex min-w-0 flex-1 flex-col">
            <MenuBar items={menuItems} />
            <div className="flex flex-1 items-center border-b-2 border-b-[#9a9a9a] pt-[2px] pr-[3px] pl-[77px]">
              <Btn w="w-[33px]"><Run /></Btn>
              <Btn w="w-[32px] -ml-px"><RunCont /></Btn>
              <Btn w="w-[32px] ml-[7px]" dim><Abort /></Btn>
              <Btn w="w-[33px] -ml-px"><Pause /></Btn>
              <Btn w="w-[32px] ml-[7px]"><Bulb /></Btn>
              <Btn w="w-[32px] ml-[7px]"><Retain /></Btn>
              <Btn w="w-[33px] ml-[6px]"><StepInto /></Btn>
              <Btn w="w-[33px] -ml-px"><StepOver /></Btn>
              <Btn w="w-[32px] -ml-px" dim><StepOut /></Btn>
              <div className="ml-[5px] flex"><FontPicker w="w-[229px]" sep="left-[201px]" /></div>
              <Btn w="w-[51px] ml-[5px]"><AlignIcon /></Btn>
              <Btn w="w-[51px] ml-[3px]"><DistIcon /></Btn>
              <Btn w="w-[51px] ml-[7px]"><ReorderIcon /></Btn>
              <Btn w="w-[38px] ml-[4px]"><Cleanup /></Btn>
              <div className="ml-auto flex"><SearchBox /><Help w="w-[33px]" /></div>
            </div>
          </div>
          <div className="flex w-[52px] shrink-0 items-center border-l-2 border-[#a8a8a8] pl-[2px]">
            <ViIcon />
          </div>
        </div>
        <div className="flex min-h-0 flex-1 bg-white">
          <Diagram />
          <VScroll whiteTop="h-[268px]" />
        </div>
        <HScroll leftWhite="w-[107px]" rightWhite="w-[297px]" />
        <div className="h-[13px] shrink-0" />
      </div>
    </div>
  </div>
);

export default App;
